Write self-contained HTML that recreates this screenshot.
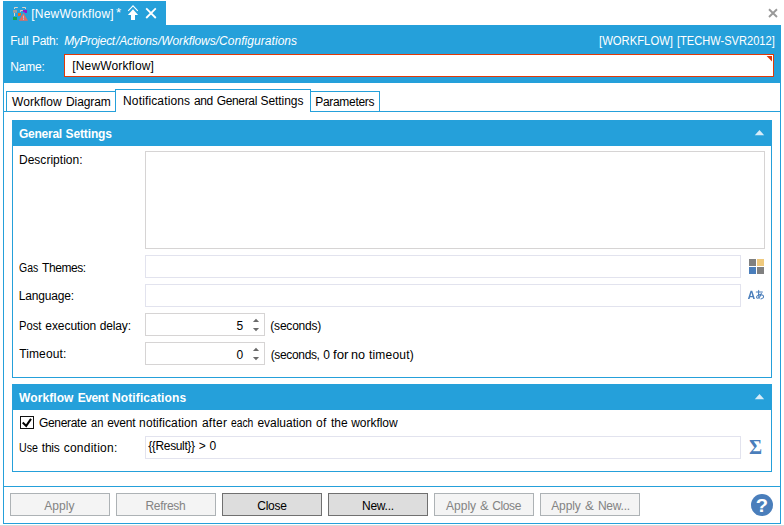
<!DOCTYPE html>
<html><head><meta charset="utf-8"><title>NewWorkflow</title><style>
html,body{margin:0;padding:0;background:#fff;}
body{width:784px;height:526px;position:relative;overflow:hidden;font-family:"Liberation Sans",sans-serif;font-size:12px;}
.r{position:absolute;box-sizing:border-box;display:block;}
.t{position:absolute;white-space:pre;transform-origin:0 0;line-height:14px;height:14px;font-size:12px;font-family:"Liberation Sans",sans-serif;}
.w{color:#fff;}
.k{color:#000;}
.g{color:#838383;}
</style></head>
<body>
<div class="r window" style="left:3px;top:25px;width:778px;height:499px;background:#fff;border:1px solid #25A0DA;"></div>
<div class="r doc-tab" style="left:3px;top:1px;width:163px;height:25px;background:#25A0DA;"></div>
<div class="r header" style="left:3px;top:25px;width:778px;height:58px;background:#25A0DA;"></div>
<div class="r input name-input" style="left:64px;top:54px;width:710px;height:23px;background:#fff;border:1px solid #E23907;"></div>
<svg class="r" style="left:766px;top:55px" width="7" height="7" viewBox="0 0 7 7"><path d="M0.6 1 L6 1 L6 6.4 Z" fill="#E23907"/></svg>
<div class="r" style="left:4px;top:111px;width:776px;height:1px;background:#25A0DA;"></div>
<div class="r tab" style="left:6px;top:91px;width:110px;height:21px;background:#fff;border:1px solid #25A0DA;"></div>
<div class="r tab" style="left:310px;top:91px;width:70px;height:21px;background:#fff;border:1px solid #25A0DA;"></div>
<div class="r tab selected" style="left:115px;top:89px;width:196px;height:23px;background:#fff;border:1px solid #25A0DA;border-bottom:none;"></div>
<div class="r panel" style="left:12px;top:120px;width:760px;height:258px;background:#fff;border:1px solid #25A0DA;"></div>
<div class="r panel-header" style="left:12px;top:120px;width:760px;height:26px;background:#25A0DA;"></div>
<svg class="r" style="left:754px;top:129px" width="11" height="7" viewBox="0 0 11 7"><path d="M0.8 6.2 L5.5 1 L10.2 6.2 Z" fill="#D6ECF8"/></svg>
<div class="r textarea" style="left:145px;top:151px;width:620px;height:98px;background:#fff;border:1px solid #D6D4D4;"></div>
<div class="r input" style="left:145px;top:255px;width:596px;height:23px;background:#fff;border:1px solid #E2E3EE;"></div>
<div class="r input" style="left:145px;top:284px;width:596px;height:23px;background:#fff;border:1px solid #E2E3EE;"></div>
<div class="r numeric" style="left:145px;top:313px;width:120px;height:23px;background:#fff;border:1px solid #D6D4D4;"></div>
<div class="r numeric" style="left:145px;top:342px;width:120px;height:23px;background:#fff;border:1px solid #D6D4D4;"></div>
<svg class="r" style="left:252px;top:318px" width="8" height="14" viewBox="0 0 8 14"><path d="M0.9 4 L4 0.8 L7.1 4 Z" fill="#6A6A6A"/><path d="M0.9 10 L4 13.2 L7.1 10 Z" fill="#6A6A6A"/></svg>
<svg class="r" style="left:252px;top:347px" width="8" height="14" viewBox="0 0 8 14"><path d="M0.9 4 L4 0.8 L7.1 4 Z" fill="#6A6A6A"/><path d="M0.9 10 L4 13.2 L7.1 10 Z" fill="#6A6A6A"/></svg>
<svg class="r" style="left:749px;top:259px" width="15" height="15" viewBox="0 0 15 15"><rect x="0" y="0" width="7" height="7" fill="#808080"/><rect x="8" y="0" width="7" height="7" fill="#EFC97D"/><rect x="0" y="8" width="7" height="7" fill="#4A7EBB"/><rect x="8" y="8" width="7" height="7" fill="#808080"/></svg>
<svg class="r" style="left:747px;top:288px" width="19" height="13" viewBox="0 0 19 13">
<path fill-rule="evenodd" fill="#4A7EBB" d="M0.9 10.9 L3.55 2.7 H5.25 L7.9 10.9 H6.25 L5.75 9.2 H3.05 L2.55 10.9 Z M3.45 7.9 H5.35 L4.4 4.5 Z"/>
<g fill="none" stroke="#4A7EBB" stroke-width="1.05" stroke-linecap="round">
<path d="M9.3 3.9 H15.4"/>
<path d="M11.7 2.4 C11.4 5 11.5 8 12.2 10.3"/>
<path d="M14.3 5.3 C13.8 7.8 12 10.3 10.5 10.3 C9.3 10.3 9.1 8.6 10.5 7.6 C12.2 6.3 15.4 6.3 16.3 7.8 C17 9.2 16 10.5 13.9 10.9"/>
</g></svg>
<div class="r panel" style="left:12px;top:384px;width:760px;height:88px;background:#fff;border:1px solid #25A0DA;"></div>
<div class="r panel-header" style="left:12px;top:384px;width:760px;height:26px;background:#25A0DA;"></div>
<svg class="r" style="left:754px;top:393px" width="11" height="7" viewBox="0 0 11 7"><path d="M0.8 6.2 L5.5 1 L10.2 6.2 Z" fill="#D6ECF8"/></svg>
<div class="r checkbox" style="left:20px;top:416px;width:14px;height:13px;background:#fff;border:1px solid #111;"></div>
<svg class="r" style="left:20px;top:416px" width="14" height="13" viewBox="0 0 14 13"><path d="M2.7 6.5 L6.2 9.9 L11 2.9" fill="none" stroke="#000" stroke-width="2"/></svg>
<div class="r input" style="left:145px;top:436px;width:596px;height:23px;background:#fff;border:1px solid #E2E3EE;"></div>
<span class="r" style="left:749px;top:435px;font-family:'Liberation Serif',serif;font-weight:bold;font-size:20px;line-height:24px;color:#4A7EBB;">&Sigma;</span>
<div class="r" style="left:4px;top:486px;width:776px;height:1px;background:#25A0DA;"></div>
<div class="r btn disabled" style="left:10px;top:493px;width:100px;height:23px;background:#F4F4F4;border:1px solid #ADB2B5;"></div>
<div class="r btn disabled" style="left:116px;top:493px;width:100px;height:23px;background:#F4F4F4;border:1px solid #ADB2B5;"></div>
<div class="r btn" style="left:222px;top:493px;width:100px;height:23px;background:#DDDDDD;border:1px solid #707070;"></div>
<div class="r btn" style="left:328px;top:493px;width:100px;height:23px;background:#DDDDDD;border:1px solid #707070;"></div>
<div class="r btn disabled" style="left:434px;top:493px;width:100px;height:23px;background:#F4F4F4;border:1px solid #ADB2B5;"></div>
<div class="r btn disabled" style="left:540px;top:493px;width:100px;height:23px;background:#F4F4F4;border:1px solid #ADB2B5;"></div>
<div class="r" style="left:751px;top:494px;width:22px;height:22px;border-radius:11px;background:#4A7EBB;"></div>
<svg class="r" style="left:751px;top:494px" width="22" height="22" viewBox="0 0 22 22">
<text x="0" y="0" text-anchor="middle" transform="translate(11 18) scale(1.15 1)" font-family="Liberation Sans, sans-serif" font-weight="bold" font-size="17.5" fill="#fff">?</text>
</svg>
<svg class="r" style="left:12px;top:6px" width="17" height="16" viewBox="0 0 17 16">
<path d="M2.5 3 V1.5 H5.8 M10.2 1.5 H13.5 V3" fill="none" stroke="#DDD3C8" stroke-width="1"/>
<path d="M8.5 5.8 V4.5 H10.8" fill="none" stroke="#DDD3C8" stroke-width="1"/>
<rect x="2" y="7" width="1" height="3" fill="#DDD3C8"/>
<rect x="1" y="4" width="4" height="2.8" fill="#A69C96"/>
<path d="M11 4 H15 V7 H12.6 V6 H11 Z" fill="#9414C8"/>
<path d="M6 7 H9 V9 L8 10 H6 Z" fill="#FB660E"/>
<rect x="1" y="11" width="4" height="3" fill="#16A84E"/>
<path d="M11.45 7 L16 14.8 L6.9 14.8 Z" fill="#E36C62"/>
<rect x="11" y="9.6" width="1" height="3" fill="#A8C0E0"/><rect x="11" y="13" width="1" height="0.9" fill="#A8C0E0"/>
</svg>
<svg class="r" style="left:126px;top:4px" width="14" height="18" viewBox="0 0 14 18">
<path d="M2.2 6.9 L7 1.9 L11.8 6.9" fill="none" stroke="#fff" stroke-width="1.1"/>
<path d="M7 5.3 L12.1 11 L9 11 L9 16 L5 16 L5 11 L1.9 11 Z" fill="#fff"/>
</svg>
<svg class="r" style="left:144px;top:6px" width="14" height="14" viewBox="0 0 14 14"><path d="M2.2 2.4 L11.8 12 M11.8 2.4 L2.2 12" stroke="#fff" stroke-width="1.8" fill="none"/></svg>
<svg class="r" style="left:766px;top:6px" width="14" height="14" viewBox="0 0 14 14"><path d="M3 3.3 L11 11 M11 3.3 L3 11" stroke="#999" stroke-width="1.9" fill="none"/></svg>
<div class="r" style="left:0px;top:525px;width:784px;height:1px;background:#D9D9D9;"></div>
<span id="t_tab" class="t w" style="left:31.21px;top:7px;letter-spacing:0.220px;">[NewWorkflow] </span>
<span id="t_star" class="t w" style="left:116.00px;top:6px;transform:scaleX(1.0165);font-size:13px;">* </span>
<span id="t_fp_0" class="t w" style="left:10.28px;top:34px;letter-spacing:-0.290px;">Full </span>
<span id="t_fp_1" class="t w" style="left:32.02px;top:34px;letter-spacing:-0.354px;">Path: </span>
<span id="t_path_0" class="t w" style="left:64.15px;top:34px;letter-spacing:-0.289px;font-style:italic;">MyProject</span><span id="t_path_1" class="t w" style="left:116.02px;top:34px;letter-spacing:-0.121px;font-style:italic;">/Actions</span><span id="t_path_2" class="t w" style="left:158.04px;top:34px;letter-spacing:-0.118px;font-style:italic;">/Workflows</span><span id="t_path_3" class="t w" style="left:215.65px;top:34px;letter-spacing:0.053px;font-style:italic;">/Configurations</span>
<span id="t_srv_0" class="t w" style="left:599.00px;top:34px;transform:scaleX(0.9401);">[WORKFLOW] </span>
<span id="t_srv_1" class="t w" style="left:677.00px;top:34px;transform:scaleX(0.9236);">[TECHW-SVR2012] </span>
<span id="t_name" class="t w" style="left:10.20px;top:60px;letter-spacing:-0.162px;">Name: </span>
<span id="t_nval" class="t k" style="left:72.29px;top:59px;letter-spacing:0.151px;">[NewWorkflow] </span>
<span id="t_tab1_0" class="t k" style="left:12.01px;top:95px;letter-spacing:0.090px;">Workflow </span>
<span id="t_tab1_1" class="t k" style="left:66.02px;top:95px;letter-spacing:-0.105px;">Diagram </span>
<span id="t_tab2_0" class="t k" style="left:123.05px;top:94px;letter-spacing:0.140px;">Notifications </span>
<span id="t_tab2_1" class="t k" style="left:194.00px;top:94px;letter-spacing:-0.421px;">and </span>
<span id="t_tab2_2" class="t k" style="left:216.72px;top:94px;letter-spacing:-0.344px;">General </span>
<span id="t_tab2_3" class="t k" style="left:260.51px;top:94px;letter-spacing:-0.060px;">Settings </span>
<span id="t_tab3" class="t k" style="left:315.27px;top:95px;letter-spacing:-0.310px;">Parameters </span>
<span id="t_gs_0" class="t w" style="left:19.02px;top:127px;letter-spacing:-0.257px;font-weight:bold;">General </span>
<span id="t_gs_1" class="t w" style="left:65.61px;top:127px;letter-spacing:-0.140px;font-weight:bold;">Settings </span>
<span id="t_desc" class="t k" style="left:18.98px;top:153px;letter-spacing:0.020px;">Description: </span>
<span id="t_gas_0" class="t k" style="left:19.00px;top:261px;transform:scaleX(0.8709);">Gas </span>
<span id="t_gas_1" class="t k" style="left:42.10px;top:261px;letter-spacing:-0.448px;">Themes: </span>
<span id="t_lang" class="t k" style="left:18.86px;top:289px;letter-spacing:-0.182px;">Language: </span>
<span id="t_post_0" class="t k" style="left:19.00px;top:319px;transform:scaleX(0.9343);">Post </span>
<span id="t_post_1" class="t k" style="left:45.29px;top:319px;letter-spacing:-0.059px;">execution </span>
<span id="t_post_2" class="t k" style="left:99.83px;top:319px;letter-spacing:-0.162px;">delay: </span>
<span id="t_to" class="t k" style="left:19.21px;top:347px;letter-spacing:0.114px;">Timeout: </span>
<span id="t_5" class="t k" style="left:236.39px;top:319px;">5 </span>
<span id="t_0" class="t k" style="left:236.44px;top:348px;">0 </span>
<span id="t_sec1" class="t k" style="left:270.34px;top:319px;letter-spacing:-0.210px;">(seconds) </span>
<span id="t_sec2_0" class="t k" style="left:270.66px;top:348px;letter-spacing:-0.341px;">(seconds, </span>
<span id="t_sec2_1" class="t k" style="left:323.33px;top:348px;">0 </span>
<span id="t_sec2_2" class="t k" style="left:333.00px;top:348px;transform:scaleX(1.1059);">for </span>
<span id="t_sec2_3" class="t k" style="left:351.00px;top:348px;transform:scaleX(1.0523);">no </span>
<span id="t_sec2_4" class="t k" style="left:368.90px;top:348px;letter-spacing:0.226px;">timeout) </span>
<span id="t_wen_0" class="t w" style="left:19.11px;top:391px;letter-spacing:0.071px;font-weight:bold;">Workflow </span>
<span id="t_wen_1" class="t w" style="left:77.68px;top:391px;letter-spacing:-0.416px;font-weight:bold;">Event </span>
<span id="t_wen_2" class="t w" style="left:111.89px;top:391px;letter-spacing:0.136px;font-weight:bold;">Notifications </span>
<span id="t_gen_0" class="t k" style="left:38.91px;top:416px;letter-spacing:-0.302px;">Generate </span>
<span id="t_gen_1" class="t k" style="left:91.00px;top:416px;transform:scaleX(0.9252);">an </span>
<span id="t_gen_2" class="t k" style="left:107.15px;top:416px;letter-spacing:-0.241px;">event </span>
<span id="t_gen_3" class="t k" style="left:139.12px;top:416px;letter-spacing:0.094px;">notification </span>
<span id="t_gen_4" class="t k" style="left:201.91px;top:416px;letter-spacing:0.253px;">after </span>
<span id="t_gen_5" class="t k" style="left:231.00px;top:416px;transform:scaleX(0.8567);">each </span>
<span id="t_gen_6" class="t k" style="left:257.44px;top:416px;letter-spacing:-0.020px;">evaluation </span>
<span id="t_gen_7" class="t k" style="left:316.05px;top:416px;letter-spacing:0.220px;">of </span>
<span id="t_gen_8" class="t k" style="left:331.02px;top:416px;letter-spacing:-0.002px;">the </span>
<span id="t_gen_9" class="t k" style="left:351.18px;top:416px;letter-spacing:-0.030px;">workflow </span>
<span id="t_use_0" class="t k" style="left:19.00px;top:441px;transform:scaleX(0.8846);">Use </span>
<span id="t_use_1" class="t k" style="left:41.81px;top:441px;letter-spacing:-0.219px;">this </span>
<span id="t_use_2" class="t k" style="left:63.72px;top:441px;letter-spacing:0.236px;">condition: </span>
<span id="t_cond_0" class="t k" style="left:148.21px;top:439px;letter-spacing:-0.358px;">{{Result}} </span>
<span id="t_cond_1" class="t k" style="left:198.80px;top:439px;">&gt; </span>
<span id="t_cond_2" class="t k" style="left:209.58px;top:439px;">0 </span>
<span id="t_b1" class="t g" style="left:44.35px;top:499px;letter-spacing:0.017px;">Apply </span>
<span id="t_b2" class="t g" style="left:145.52px;top:499px;letter-spacing:-0.310px;">Refresh </span>
<span id="t_b3" class="t k" style="left:257.37px;top:499px;letter-spacing:-0.306px;">Close </span>
<span id="t_b4" class="t k" style="left:361.97px;top:499px;letter-spacing:-0.251px;">New... </span>
<span id="t_b5_0" class="t g" style="left:446.08px;top:499px;letter-spacing:-0.018px;">Apply </span>
<span id="t_b5_1" class="t g" style="left:480.00px;top:499px;transform:scaleX(1.0710);">&amp; </span>
<span id="t_b5_2" class="t g" style="left:492.28px;top:499px;letter-spacing:-0.388px;">Close </span>
<span id="t_b6_0" class="t g" style="left:551.17px;top:499px;letter-spacing:-0.081px;">Apply </span>
<span id="t_b6_1" class="t g" style="left:585.00px;top:499px;transform:scaleX(1.0974);">&amp; </span>
<span id="t_b6_2" class="t g" style="left:597.93px;top:499px;letter-spacing:-0.219px;">New... </span>
</body></html>
